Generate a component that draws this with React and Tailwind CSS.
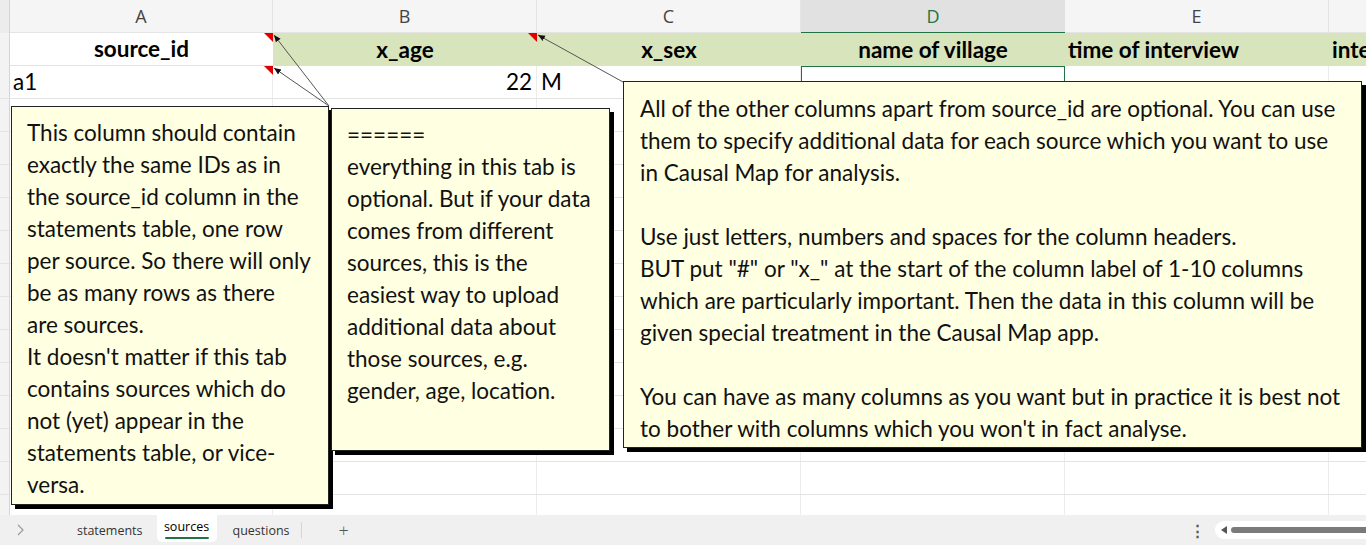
import React from "react";

const cols = [
  { key: "A", w: "w-[263px]" },
  { key: "B", w: "w-[264px]" },
  { key: "C", w: "w-[264px]" },
  { key: "D", w: "w-[264px]" },
  { key: "E", w: "w-[264px]" },
  { key: "F", w: "w-[264px]" },
];

const box1 = [
  "This column should contain",
  "exactly the same IDs as in",
  "the source_id column in the",
  "statements table, one row",
  "per source. So there will only",
  "be as many rows as there",
  "are sources.",
  "It doesn't matter if this tab",
  "contains sources which do",
  "not (yet) appear in the",
  "statements table, or vice-",
  "versa.",
];

const box2 = [
  "======",
  "everything in this tab is",
  "optional. But if your data",
  "comes from different",
  "sources, this is the",
  "easiest way to upload",
  "additional data about",
  "those sources, e.g.",
  "gender, age, location.",
];

const box3 = [
  "All of the other columns apart from source_id are optional. You can use",
  "them to specify additional data for each source which you want to use",
  "in Causal Map for analysis.",
  "",
  "Use just letters, numbers and spaces for the column headers.",
  "BUT put \"#\" or \"x_\" at the start of the column label of 1-10 columns",
  "which are particularly important. Then the data in this column will be",
  "given special treatment in the Causal Map app.",
  "",
  "You can have as many columns as you want but in practice it is best not",
  "to bother with columns which you won't in fact analyse.",
];

function Lines({ lines }) {
  return lines.map((l, i) => (
    <div key={i} className="h-[32px] leading-[32px] whitespace-nowrap">
      {l || "\u00a0"}
    </div>
  ));
}

function EmptyRow() {
  return (
    <div className="flex h-[33px] border-b border-[#e3e3e3]">
      <div className="w-[10px] shrink-0 bg-[#f3f3f3] border-r border-[#d4d4d4]" />
      {cols.map((c) => (
        <div key={c.key} className={`${c.w} shrink-0 border-r border-[#ececec]`} />
      ))}
    </div>
  );
}

export default function App() {
  return (
    <div
      className="w-[1366px] h-[545px] overflow-hidden bg-white flex flex-col text-black"
      style={{ fontFamily: "Lato, 'Noto Sans', sans-serif" }}
    >
      <div className="relative flex-1 overflow-hidden">
        {/* column letters */}
        <div className="flex h-[33px] bg-[#f5f5f5] text-[18px] text-[#444]" style={{ fontFamily: "'Open Sans', sans-serif" }}>
          <div className="w-[10px] shrink-0 bg-[#ececec] border-r border-[#d4d4d4]" />
          {cols.map((c) =>
            c.key === "D" ? (
              <div key={c.key} className={`${c.w} shrink-0 flex items-center justify-center bg-[#e1e1e1] text-[#217346] border-b border-[#217346]`}>
                {c.key}
              </div>
            ) : (
              <div key={c.key} className={`${c.w} shrink-0 flex items-center justify-center border-r border-[#e4e4e4] border-b border-[#d9d9d9]`}>
                {c.key === "F" ? "" : c.key}
              </div>
            )
          )}
        </div>

        {/* row 1 */}
        <div className="flex h-[33px] text-[22.5px] font-bold">
          <div className="w-[10px] shrink-0 bg-[#f3f3f3] border-r border-[#d4d4d4]" />
          <div className="w-[263px] shrink-0 flex items-center justify-center bg-white border-b border-[#e3e3e3]">source_id</div>
          <div className="w-[264px] shrink-0 flex items-center justify-center bg-[#d8e4bc]">x_age</div>
          <div className="w-[264px] shrink-0 flex items-center justify-center bg-[#d8e4bc]">x_sex</div>
          <div className="w-[264px] shrink-0 flex items-center justify-center bg-[#d8e4bc]">name of village</div>
          <div className="w-[264px] shrink-0 flex items-center pl-[3px] bg-[#d8e4bc]">time of interview</div>
          <div className="w-[264px] shrink-0 flex items-center pl-[3px] bg-[#d8e4bc] whitespace-nowrap">interviewer</div>
        </div>

        {/* row 2 */}
        <div className="flex h-[33px] text-[22.5px] border-b border-[#e3e3e3]">
          <div className="w-[10px] shrink-0 bg-[#f3f3f3] border-r border-[#d4d4d4]" />
          <div className="w-[263px] shrink-0 flex items-center pl-[3px] border-r border-[#ececec]">a1</div>
          <div className="w-[264px] shrink-0 flex items-center justify-end pr-[4px] border-r border-[#ececec]">22</div>
          <div className="w-[264px] shrink-0 flex items-center pl-[4px] border-r border-[#ececec]">M</div>
          <div className="w-[264px] shrink-0 border border-[#217346]" />
          <div className="w-[264px] shrink-0 border-r border-[#ececec]" />
          <div className="w-[264px] shrink-0" />
        </div>

        {Array.from({ length: 13 }).map((_, i) => (
          <EmptyRow key={i} />
        ))}

        {/* comment indicators and connectors */}
        <svg className="absolute inset-0 pointer-events-none" width="1366" height="515">
          <defs>
            <marker id="ah" markerWidth="8" markerHeight="8" refX="7" refY="4" orient="auto">
              <path d="M0,1 L7,4 L0,7 z" fill="#111" />
            </marker>
          </defs>
          <polygon points="264,33 273,33 273,42" fill="#e00000" />
          <polygon points="264,66 273,66 273,75" fill="#e00000" />
          <polygon points="528,33 537,33 537,42" fill="#e00000" />
          <line x1="329" y1="106" x2="274" y2="35" stroke="#555" strokeWidth="1" markerEnd="url(#ah)" />
          <line x1="329" y1="106" x2="274" y2="68" stroke="#555" strokeWidth="1" markerEnd="url(#ah)" />
          <line x1="623" y1="82" x2="538" y2="35" stroke="#555" strokeWidth="1" markerEnd="url(#ah)" />
        </svg>

        {/* comment boxes */}
        <div className="absolute left-[11px] top-[106px] w-[318px] h-[399px] bg-[#ffffe1] border border-[#222] shadow-[4px_4px_0_#000] pl-[15px] pt-[10px] text-[22.5px] text-[#111]">
          <Lines lines={box1} />
        </div>
        <div className="absolute left-[331px] top-[108px] w-[279px] h-[343px] bg-[#ffffe1] border border-[#222] shadow-[4px_4px_0_#000] pl-[15px] pt-[10px] text-[22.5px] text-[#111]">
          <Lines lines={box2} />
        </div>
        <div className="absolute left-[623px] top-[81px] w-[739px] h-[367px] bg-[#ffffe1] border border-[#222] shadow-[4px_4px_0_#000] pl-[16px] pt-[11px] text-[22.5px] text-[#111]">
          <Lines lines={box3} />
        </div>
      </div>

      {/* sheet tabs */}
      <div className="h-[30px] shrink-0 bg-[#f0f0f0] flex items-center text-[12.5px] text-[#333]" style={{ fontFamily: "'Open Sans', sans-serif" }}>
        <div className="w-[40px] pl-[17px] flex items-center">
          <svg width="7" height="12" viewBox="0 0 7 12"><path d="M1,1 L6,6 L1,11" fill="none" stroke="#9a9a9a" strokeWidth="1.2" /></svg>
        </div>
        <span className="ml-[37px] mt-[2px]">statements</span>
        <div className="ml-[14px] self-start h-[27px] w-[60px] bg-white rounded-b-[5px] flex flex-col items-center justify-center">
          <span className="text-black leading-[16px]">sources</span>
          <span className="h-[2px] w-[44px] bg-[#217346] rounded mt-[2px]" />
        </div>
        <span className="ml-[16px] mt-[2px]">questions</span>
        <span className="ml-[11px] h-[16px] border-l border-[#d5d5d5]" />
        <span className="ml-[37px] text-[18px] text-[#555] font-light">+</span>
        <div className="flex-1" />
        <span className="text-[#555] text-[15px] font-bold mr-[10px]">⋮</span>
        <div className="w-[151px] h-[18px] bg-white rounded-l-full flex items-center pl-[6px] gap-[4px]">
          <svg width="6" height="8" viewBox="0 0 6 8"><path d="M6,0 L0,4 L6,8 z" fill="#555" /></svg>
          <div className="flex-1 h-[6px] bg-[#7a7a7a] rounded-l-full" />
        </div>
      </div>
    </div>
  );
}
